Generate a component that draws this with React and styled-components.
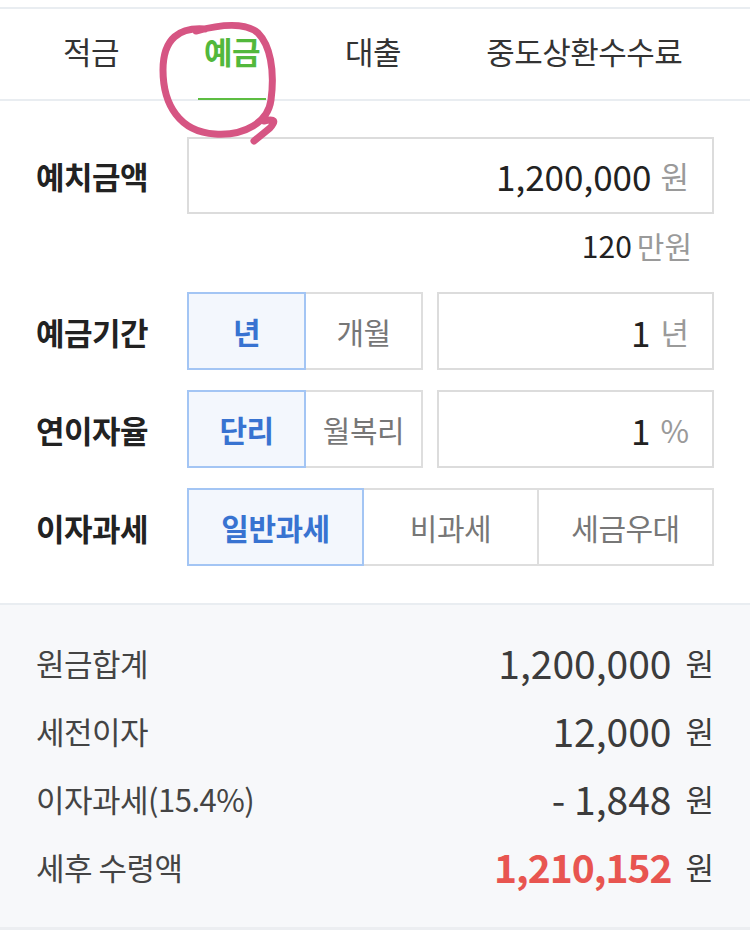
import styled, { createGlobalStyle } from "styled-components";

const GlobalStyle = createGlobalStyle`
  body {
    margin: 0;
    background: #fff;
    font-family: "Noto Sans CJK KR", "Noto Sans", sans-serif;
    color: #222;
  }
`;

const Styled = {};

Styled.Page = styled.div`
  position: relative;
  width: 750px;
  padding-top: 7px;
`;

Styled.Tabs = styled.nav`
  display: flex;
  gap: 73px;
  height: 90px;
  padding-left: 57px;
  border-top: 2px solid #e9edf1;
  border-bottom: 2px solid #e9edf1;
`;

Styled.Tab = styled.div`
  position: relative;
  display: flex;
  align-items: center;
  padding: 0 6px 8px;
  font-size: 31px;
  font-weight: ${(p) => (p.$active ? 700 : 400)};
  color: ${(p) => (p.$active ? "#52b83c" : "#333")};
  letter-spacing: -0.5px;

  &::after {
    content: "";
    display: ${(p) => (p.$active ? "block" : "none")};
    position: absolute;
    left: 0;
    right: 0;
    bottom: -1px;
    height: 2px;
    background: #5dbd42;
  }
`;

Styled.Form = styled.div`
  padding: 36px 36px 37px;
`;

Styled.Row = styled.div`
  display: flex;
  align-items: center;
  margin-top: ${(p) => p.$gap || 0}px;
`;

Styled.Label = styled.div`
  width: 151px;
  flex-shrink: 0;
  font-size: 31px;
  font-weight: 700;
  color: #222;
  letter-spacing: -0.5px;
`;

Styled.Field = styled.div`
  flex: 1;
  height: 77px;
  box-sizing: border-box;
  border: 2px solid #dcdcdc;
  display: flex;
  align-items: center;
  justify-content: flex-end;
  padding-right: 23px;
  gap: 9px;
`;

Styled.Value = styled.span`
  font-size: 35px;
  color: #222;
`;

Styled.Unit = styled.span`
  font-size: 31px;
  color: #9a9a9a;
`;

Styled.Note = styled.div`
  margin: 17px 0 33px;
  padding-right: 22px;
  text-align: right;
  font-size: 30px;
  line-height: 28px;
  color: #222;

  span {
    color: #9a9a9a;
    margin-left: 5px;
  }
`;

Styled.Segments = styled.div`
  display: flex;
  width: ${(p) => p.$width};
  flex-shrink: 0;
`;

Styled.Segment = styled.div`
  position: relative;
  z-index: ${(p) => (p.$active ? 1 : 0)};
  flex: 1;
  height: 78px;
  box-sizing: border-box;
  margin-left: -2px;
  border: 2px solid ${(p) => (p.$active ? "#a3c5f4" : "#dedede")};
  background: ${(p) => (p.$active ? "#f3f7fd" : "#fff")};
  display: flex;
  align-items: center;
  justify-content: center;
  font-size: 30px;
  font-weight: ${(p) => (p.$active ? 700 : 400)};
  color: ${(p) => (p.$active ? "#3873d1" : "#777")};
  letter-spacing: -0.5px;

  &:first-child {
    margin-left: 0;
  }
`;

Styled.SmallField = styled(Styled.Field)`
  height: 78px;
  margin-left: 14px;
  gap: 10px;
`;

Styled.Summary = styled.div`
  background: #f7f8fa;
  border-top: 2px solid #e9edf1;
  border-bottom: 3px solid #eceef1;
  padding: 23px 36px 27px;
`;

Styled.SummaryRow = styled.div`
  display: flex;
  align-items: center;
  justify-content: space-between;
  height: 68px;
`;

Styled.SummaryLabel = styled.span`
  font-size: 31px;
  color: #444;
  letter-spacing: -0.5px;
`;

Styled.Amount = styled.span`
  display: flex;
  align-items: center;
  gap: 14px;
  font-size: 39px;
  color: ${(p) => (p.$highlight ? "#e85550" : "#3c3c3c")};
  font-weight: ${(p) => (p.$highlight ? 700 : 400)};
  letter-spacing: ${(p) => (p.$highlight ? "-1px" : "0")};

  small {
    font-size: 31px;
    font-weight: 400;
    letter-spacing: 0;
    color: #3c3c3c;
  }
`;

Styled.Annotation = styled.svg`
  position: absolute;
  left: 0;
  top: 0;
  pointer-events: none;
`;

const summary = [
  { label: "원금합계", value: "1,200,000" },
  { label: "세전이자", value: "12,000" },
  { label: "이자과세(15.4%)", value: "- 1,848" },
  { label: "세후 수령액", value: "1,210,152", highlight: true },
];

const App = () => {
  return (
    <>
      <GlobalStyle />
      <Styled.Page>
        <Styled.Tabs>
          <Styled.Tab>적금</Styled.Tab>
          <Styled.Tab $active>예금</Styled.Tab>
          <Styled.Tab>대출</Styled.Tab>
          <Styled.Tab>중도상환수수료</Styled.Tab>
        </Styled.Tabs>

        <Styled.Form>
          <Styled.Row>
            <Styled.Label>예치금액</Styled.Label>
            <Styled.Field>
              <Styled.Value>1,200,000</Styled.Value>
              <Styled.Unit>원</Styled.Unit>
            </Styled.Field>
          </Styled.Row>
          <Styled.Note>
            120<span>만원</span>
          </Styled.Note>

          <Styled.Row>
            <Styled.Label>예금기간</Styled.Label>
            <Styled.Segments $width="236px">
              <Styled.Segment $active>년</Styled.Segment>
              <Styled.Segment>개월</Styled.Segment>
            </Styled.Segments>
            <Styled.SmallField>
              <Styled.Value>1</Styled.Value>
              <Styled.Unit>년</Styled.Unit>
            </Styled.SmallField>
          </Styled.Row>

          <Styled.Row $gap={20}>
            <Styled.Label>연이자율</Styled.Label>
            <Styled.Segments $width="236px">
              <Styled.Segment $active>단리</Styled.Segment>
              <Styled.Segment>월복리</Styled.Segment>
            </Styled.Segments>
            <Styled.SmallField>
              <Styled.Value>1</Styled.Value>
              <Styled.Unit>%</Styled.Unit>
            </Styled.SmallField>
          </Styled.Row>

          <Styled.Row $gap={20}>
            <Styled.Label>이자과세</Styled.Label>
            <Styled.Segments $width="527px">
              <Styled.Segment $active>일반과세</Styled.Segment>
              <Styled.Segment>비과세</Styled.Segment>
              <Styled.Segment>세금우대</Styled.Segment>
            </Styled.Segments>
          </Styled.Row>
        </Styled.Form>

        <Styled.Summary>
          {summary.map((s, i) => (
            <Styled.SummaryRow key={i}>
              <Styled.SummaryLabel>{s.label}</Styled.SummaryLabel>
              <Styled.Amount $highlight={s.highlight}>
                {s.value}
                <small>원</small>
              </Styled.Amount>
            </Styled.SummaryRow>
          ))}
        </Styled.Summary>

        {/* hand-drawn marker circle around the active tab */}
        <Styled.Annotation width="750" height="160" viewBox="0 0 750 160">
          <path
            d="M205 29 C180 27 163 38 163 70 C163 105 180 132 215 134 C245 136 268 122 271 100 C275 70 270 45 258 33 C245 22 222 24 196 31 M264 121 Q280 117 270 128 L254 141"
            fill="none"
            stroke="#d65583"
            strokeWidth="7"
            strokeLinecap="round"
            strokeLinejoin="round"
          />
        </Styled.Annotation>
      </Styled.Page>
    </>
  );
};

export default App;
